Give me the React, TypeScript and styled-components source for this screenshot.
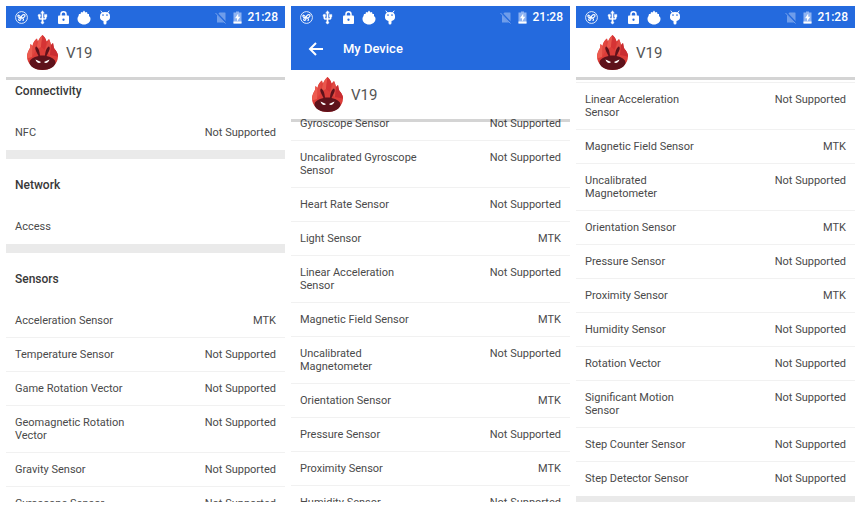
import React from "react";
import styled, { createGlobalStyle } from "styled-components";

const GlobalStyle = createGlobalStyle`
  *, *::before, *::after { box-sizing: border-box; }
  body {
    margin: 0;
    background: #fff;
    color: #4a4a4a;
    font-family: Roboto, "Noto Sans", sans-serif;
    font-size: 11px;
    line-height: 13px;
  }
`;

const Gallery = styled.main`
  display: grid;
  grid-template-columns: repeat(3, minmax(0, 1fr));
  gap: 6px;
  height: 100vh;
  padding: 6px 5px 6px 6px;
`;

const Screen = styled.section`
  display: flex;
  flex-direction: column;
  min-height: 0;
  overflow: hidden;
  background: #fff;
`;

const StatusBar = styled.div`
  display: flex;
  flex: none;
  align-items: center;
  justify-content: space-between;
  height: 22px;
  padding: 0 7px 0 9px;
  background: #246ade;
  color: #fff;
`;

const Notifications = styled.div`
  display: flex;
  align-items: center;
  gap: 7px;
`;

const SystemState = styled.div`
  display: flex;
  align-items: center;
  gap: 6px;
`;

const Clock = styled.time`
  font-size: 12px;
  font-weight: 500;
`;

const AppBar = styled.div`
  display: flex;
  flex: none;
  align-items: center;
  gap: 20px;
  height: 42px;
  padding-left: 17px;
  background: #246ade;
  color: #fff;
`;

const BackButton = styled.button`
  display: flex;
  padding: 0;
  border: 0;
  background: none;
  color: inherit;
  cursor: pointer;
`;

const AppTitle = styled.h1`
  margin: 0;
  font-size: 13px;
  font-weight: 500;
  line-height: 18px;
`;

const DeviceHeader = styled.header`
  position: relative;
  z-index: 1;
  display: flex;
  flex: none;
  align-items: center;
  gap: 8px;
  height: 49px;
  padding-left: 21px;
  background: #fff;
  box-shadow: 0 3px 0 rgba(0, 0, 0, 0.17);
`;

const DeviceName = styled.span`
  color: #555;
  font-size: 15px;
  line-height: 18px;
`;

const Viewport = styled.div`
  flex: 1;
  min-height: 0;
  overflow: hidden;
`;

const Content = styled.div<{ $offset: number }>`
  display: flow-root;
  margin-top: ${(p) => p.$offset}px;
`;

const Group = styled.div`
  border-bottom: 9px solid #eaeaea;
`;

const GroupTitle = styled.h2`
  margin: 0;
  padding: 20px 9px 18px;
  font-size: 12px;
  font-weight: 500;
  line-height: 13px;
  color: #383838;
`;

const SpecTable = styled.table`
  width: 100%;
  border-collapse: separate;
  border-spacing: 0;
  table-layout: fixed;
`;

const SpecRow = styled.tr`
  th, td {
    padding: 10px 0;
    border-bottom: 1px solid #f1f1f1;
    font-weight: 400;
    vertical-align: top;
  }
  &:last-child th, &:last-child td { border-color: transparent; }
`;

const SpecName = styled.th`
  width: 47%;
  && { padding-left: 9px; }
  text-align: left;
`;

const SpecValue = styled.td`
  && { padding-right: 9px; }
  text-align: right;
`;

const CloneIcon = () => (
  <svg width="13" height="13" viewBox="0 0 26 26" fill="none" stroke="#fff" aria-hidden="true">
    <circle cx="13" cy="13" r="11.800" strokeWidth="1.700" />
    <path d="M12 14C9 7 5 7 6 11c1 3 4 3 6 3-5 0-6 5-3 5s3-3 3-5c1-6 5-8 8-6 1 3-3 6-7 6 4 0 5 3 3 5" strokeWidth="2.200" strokeLinecap="round" strokeLinejoin="round" />
  </svg>
);

const UsbIcon = () => (
  <svg width="15" height="15" viewBox="0 0 24 24" fill="#fff" aria-hidden="true">
    <path d="M15 7v4h1v2h-3V5h2l-3-4-3 4h2v8H8v-2.070c.7-.37 1.200-1.080 1.200-1.930a2.200 2.200 0 1 0-4.400 0c0 .85.5 1.560 1.200 1.930V13a2 2 0 0 0 2 2h3v3.050a2.200 2.200 0 1 0 2 0V15h3a2 2 0 0 0 2-2v-2h1V7z" stroke="#fff" strokeWidth=".6" />
  </svg>
);

const LockIcon = () => (
  <svg width="13" height="15" viewBox="0 0 26 30" aria-hidden="true">
    <path d="M8 12V8.500a5 5 0 0 1 10 0V12" fill="none" stroke="#fff" strokeWidth="3" />
    <rect x="2" y="11" width="22" height="17" rx="2" fill="#fff" />
    <circle cx="13" cy="19.500" r="2.300" fill="#246ade" />
  </svg>
);

const FlameIcon = () => (
  <svg width="14" height="15" viewBox="0 0 28 30" fill="#fff" aria-hidden="true">
    <path d="M14 1l3 4 3-1 1 4 3 0v4c2 2 3 3 3 6 0 6-6 11-13 11S1 24 1 18c0-3 1-4 2-6l1-4 3 0 1-4 3 1z" />
  </svg>
);

const BugDroidIcon = () => (
  <svg width="14" height="15" viewBox="0 0 28 30" aria-hidden="true">
    <path d="M6 2l4 5M22 2l-4 5" stroke="#fff" strokeWidth="2" strokeLinecap="round" />
    <path d="M4 12C4 7 8 4 14 4s10 3 10 8v3c0 4-3 6-7 7v4a3 3 0 0 1-6 0v-4c-4-1-7-3-7-7z" fill="#fff" />
    <circle cx="10" cy="10" r="1.700" fill="#246ade" />
    <circle cx="18" cy="10" r="1.700" fill="#246ade" />
  </svg>
);

const NoSimIcon = () => (
  <svg width="12" height="13" viewBox="0 0 24 26" aria-hidden="true">
    <path d="M9 3h11a1 1 0 0 1 1 1v19H4V8z" fill="#6f9dea" />
    <path d="M1 2l21 22" stroke="#246ade" strokeWidth="4" />
    <path d="M1 4l20 21" stroke="#7fa8ee" strokeWidth="1.800" />
  </svg>
);

const BatteryIcon = () => (
  <svg width="9" height="13" viewBox="0 0 18 26" aria-hidden="true">
    <path d="M6 1h6v2h5v22H1V3h5z" fill="#8fb3f1" />
    <path d="M1 21h16v4H1z" fill="#fff" />
    <path d="M10.500 5L4 14.500h4V21l6.500-9.500h-4z" fill="#fff" />
  </svg>
);

const BackArrow = () => (
  <svg width="15" height="14" viewBox="0 0 15 14" fill="none" stroke="currentColor" strokeWidth="2" aria-hidden="true">
    <path d="M15 7H2M8 1L2 7l6 6" />
  </svg>
);

const BenchmarkLogo = () => (
  <svg width="31" height="35" viewBox="0 0 62 70" role="img" aria-label="Benchmark logo">
    <path d="M31 0c4 4 7 8 8 13l5-5c2 4 3 8 4 12l4-4c1 4 1 8 3 12 4 4 7 9 7 15 0 15-14 27-31 27S0 58 0 43c0-7 3-12 6-17l1-8 4 4c1-6 4-12 9-15l2 6c2-5 5-9 9-13z" fill="#dc3d39" />
    <path d="M31 0c-4 4-7 8-9 13l-4 17 10-6z" fill="#e9564c" />
    <path d="M31 0c4 4 7 8 8 13l-3 17-8-6z" fill="#d53435" />
    <path d="M44 8c2 4 3 8 4 12l-2 20-10-10z" fill="#e04b44" />
    <path d="M20 7c-5 3-8 9-9 15l-1 22 8-14z" fill="#e14740" />
    <path d="M7 18l4 4-1 22-10 3c0-9 2-14 6-21z" fill="#ed5c50" />
    <path d="M52 16c1 4 1 8 3 12 4 4 7 9 7 15l-16-3 2-20z" fill="#c92d31" />
    <path d="M23 42l-5-10c-2-4-2-8 0-9 4 1 7 8 8 18h10c1-10 4-17 8-18 2 1 2 5 0 9l-5 10c10 2 18 7 18 13 0 8-12 15-26 15S5 63 5 55c0-6 8-11 18-13z" fill="#5e121b" />
    <path d="M17 49l11 5c-3 4-9 2-11-5zm28 0l-11 5c3 4 9 2 11-5z" fill="#fff" />
  </svg>
);

type Spec = [name: string, value: string];
interface SpecGroup { title?: string; specs: Spec[] }
interface ScreenData { id: string; appTitle?: string; offset: number; groups: SpecGroup[] }

const NONE = "Not Supported";

const screens: ScreenData[] = [
  {
    id: "overview",
    offset: -12,
    groups: [
      { title: "Connectivity", specs: [["NFC", NONE]] },
      { title: "Network", specs: [["Access", ""]] },
      {
        title: "Sensors",
        specs: [
          ["Acceleration Sensor", "MTK"],
          ["Temperature Sensor", NONE],
          ["Game Rotation Vector", NONE],
          ["Geomagnetic Rotation Vector", NONE],
          ["Gravity Sensor", NONE],
          ["Gyroscope Sensor", NONE],
        ],
      },
    ],
  },
  {
    id: "sensors",
    appTitle: "My Device",
    offset: -12,
    groups: [
      {
        specs: [
          ["Gyroscope Sensor", NONE],
          ["Uncalibrated Gyroscope Sensor", NONE],
          ["Heart Rate Sensor", NONE],
          ["Light Sensor", "MTK"],
          ["Linear Acceleration Sensor", NONE],
          ["Magnetic Field Sensor", "MTK"],
          ["Uncalibrated Magnetometer", NONE],
          ["Orientation Sensor", "MTK"],
          ["Pressure Sensor", NONE],
          ["Proximity Sensor", "MTK"],
          ["Humidity Sensor", NONE],
        ],
      },
    ],
  },
  {
    id: "more-sensors",
    offset: -28,
    groups: [
      {
        specs: [
          ["Light Sensor", "MTK"],
          ["Linear Acceleration Sensor", NONE],
          ["Magnetic Field Sensor", "MTK"],
          ["Uncalibrated Magnetometer", NONE],
          ["Orientation Sensor", "MTK"],
          ["Pressure Sensor", NONE],
          ["Proximity Sensor", "MTK"],
          ["Humidity Sensor", NONE],
          ["Rotation Vector", NONE],
          ["Significant Motion Sensor", NONE],
          ["Step Counter Sensor", NONE],
          ["Step Detector Sensor", NONE],
        ],
      },
    ],
  },
];

const DeviceScreen = ({ appTitle, offset, groups }: ScreenData) => (
  <Screen>
    <StatusBar>
      <Notifications>
        <CloneIcon />
        <UsbIcon />
        <LockIcon />
        <FlameIcon />
        <BugDroidIcon />
      </Notifications>
      <SystemState>
        <NoSimIcon />
        <BatteryIcon />
        <Clock>21:28</Clock>
      </SystemState>
    </StatusBar>
    {appTitle && (
      <AppBar>
        <BackButton type="button" aria-label="Back">
          <BackArrow />
        </BackButton>
        <AppTitle>{appTitle}</AppTitle>
      </AppBar>
    )}
    <DeviceHeader>
      <BenchmarkLogo />
      <DeviceName>V19</DeviceName>
    </DeviceHeader>
    <Viewport>
      <Content $offset={offset}>
        {groups.map((group, index) => (
          <Group key={index}>
            {group.title && <GroupTitle>{group.title}</GroupTitle>}
            <SpecTable>
              <tbody>
                {group.specs.map(([name, value]) => (
                  <SpecRow key={name}>
                    <SpecName scope="row">{name}</SpecName>
                    <SpecValue>{value}</SpecValue>
                  </SpecRow>
                ))}
              </tbody>
            </SpecTable>
          </Group>
        ))}
      </Content>
    </Viewport>
  </Screen>
);

export default function App() {
  return (
    <>
      <GlobalStyle />
      <Gallery>
        {screens.map((screen) => (
          <DeviceScreen key={screen.id} {...screen} />
        ))}
      </Gallery>
    </>
  );
}
